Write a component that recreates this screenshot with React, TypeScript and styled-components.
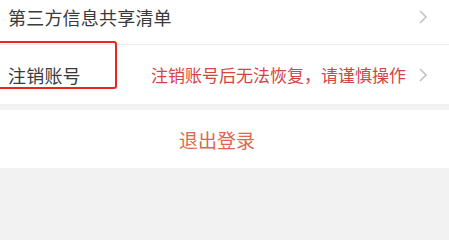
import React from "react"
import styled, { createGlobalStyle } from "styled-components"

const GlobalStyle = createGlobalStyle`
  html, body {
    margin: 0;
    padding: 0;
    background: #f2f2f2;
    font-family: "Noto Sans CJK SC", "Noto Sans", sans-serif;
  }
`

const Page = styled.div`
  position: relative;
  width: 449px;
  height: 225px;
  overflow: hidden;
  background: #f2f2f2;
`

const List = styled.div`
  background: #ffffff;
  display: flex;
  flex-direction: column;
`

const Row = styled.div<{ $height: number; $padBottom?: number; $divider?: boolean }>`
  display: flex;
  align-items: center;
  height: ${(p) => p.$height}px;
  box-sizing: border-box;
  padding: 0 22px ${(p) => p.$padBottom || 0}px 8px;
  border-bottom: ${(p) => (p.$divider ? "1px solid #ececec" : "none")};
`

const Label = styled.span`
  flex: 1;
  font-size: 18px;
  color: #3a3a3a;
  letter-spacing: 0.2px;
`

const Hint = styled.span`
  font-size: 17px;
  color: #d4453f;
  margin-right: 13px;
`

const Logout = styled.div`
  margin-top: 6px;
  height: 58px;
  background: #ffffff;
  display: flex;
  align-items: center;
  justify-content: center;
  padding-right: 15px;
  font-size: 19px;
  color: #e0664f;
`

const Highlight = styled.div`
  position: absolute;
  left: -4px;
  top: 41px;
  width: 121px;
  height: 48px;
  box-sizing: border-box;
  border: 2px solid #e8251f;
  border-radius: 3px;
`

const Chevron = () => (
  <svg width="8" height="14" viewBox="0 0 8 14">
    <polyline points="1,1 7,7 1,13" fill="none" stroke="#c4c4c4" strokeWidth="1.6" />
  </svg>
)

export default function App() {
  return (
    <Page>
      <GlobalStyle />
      <List>
        <Row $height={45} $padBottom={10} $divider>
          <Label>第三方信息共享清单</Label>
          <Chevron />
        </Row>
        <Row $height={59}>
          <Label>注销账号</Label>
          <Hint>注销账号后无法恢复，请谨慎操作</Hint>
          <Chevron />
        </Row>
      </List>
      <Logout>退出登录</Logout>
      <Highlight />
    </Page>
  )
}
